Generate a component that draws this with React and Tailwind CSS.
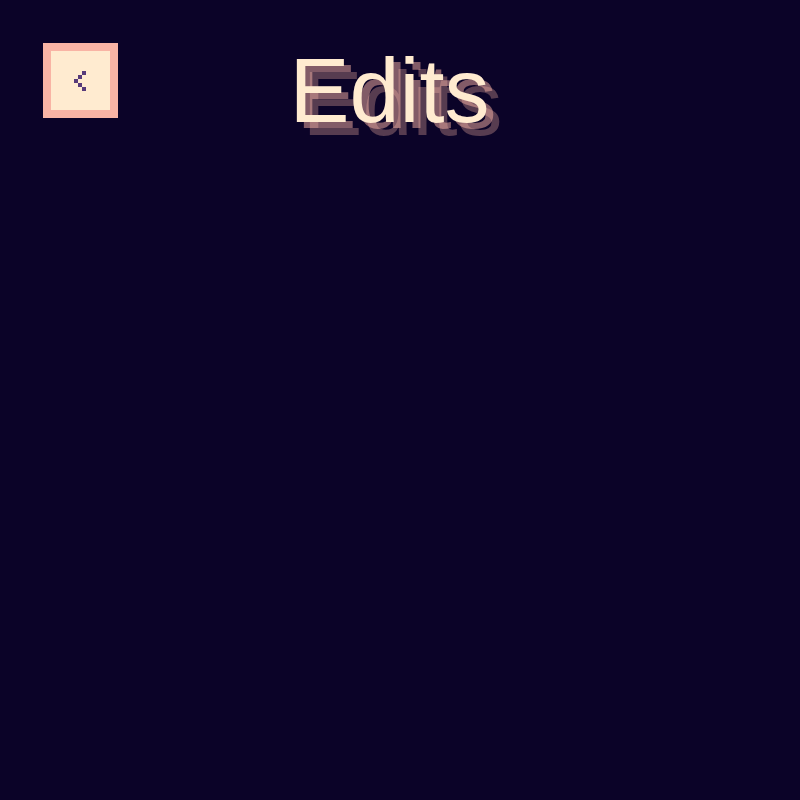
function PixelChevronLeft() {
  return (
    <svg
      className="h-5 w-3"
      viewBox="0 0 3 5"
      fill="currentColor"
      shapeRendering="crispEdges"
      aria-hidden="true"
    >
      <rect x="2" y="0" width="1" height="1" />
      <rect x="1" y="1" width="1" height="1" />
      <rect x="0" y="2" width="1" height="1" />
      <rect x="1" y="3" width="1" height="1" />
      <rect x="2" y="4" width="1" height="1" />
    </svg>
  );
}

export default function App() {
  return (
    <main className="min-h-screen bg-[#0b0328] font-['Liberation_Sans',Arial,sans-serif]">
      <header className="grid grid-cols-[75px_1fr_96px] items-start px-[43px] pt-[43px]">
        <button
          type="button"
          aria-label="Back"
          className="flex h-[75px] w-[75px] items-center justify-center border-8 border-[#f9b4a5] bg-[#ffebd0] pr-0.5 text-[#573a7a]"
        >
          <PixelChevronLeft />
        </button>
        <h1 className="text-center text-[90px] leading-[96px] text-[#ffebd0] [text-shadow:7px_6px_0_rgba(249,180,165,0.5),13px_13px_0_rgba(249,180,165,0.32)]">
          Edits
        </h1>
      </header>
    </main>
  );
}
